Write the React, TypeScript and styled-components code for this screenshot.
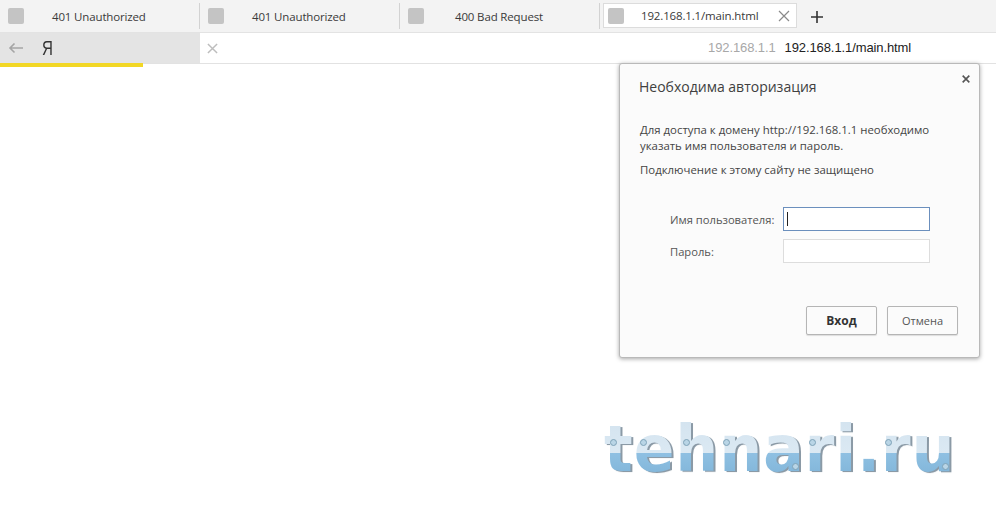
import React from "react";
import styled, { createGlobalStyle } from "styled-components";

const GlobalStyle = createGlobalStyle`
  html, body {
    margin: 0;
    padding: 0;
    background: #ffffff;
  }
  body {
    font-family: "Open Sans", "Noto Sans", sans-serif;
  }
`;

const Page = styled.div`
  width: 996px;
  height: 505px;
  overflow: hidden;
`;

const TabBar = styled.div`
  display: flex;
  height: 33px;
  background: #f3f3f3;
  border-bottom: 1px solid #e3e3e3;
  box-sizing: border-box;
`;

const Tab = styled.div`
  display: flex;
  align-items: center;
  width: 200px;
  height: 32px;
  padding: 0 0 0 8px;
  box-sizing: border-box;
  position: relative;
  &::after {
    content: "";
    position: absolute;
    right: 0;
    top: 3px;
    width: 1px;
    height: 26px;
    background: #d2d2d2;
  }
`;

const Favicon = styled.span`
  width: 16px;
  height: 16px;
  border-radius: 2px;
  background: #c4c4c4;
  flex: none;
`;

const TabTitle = styled.span<{ $gap?: number }>`
  margin-left: ${(p) => p.$gap ?? 28}px;
  font-size: 11.5px;
  letter-spacing: -0.15px;
  color: #3a3a3a;
  white-space: nowrap;
`;

const ActiveTab = styled.div`
  display: flex;
  align-items: center;
  width: 194px;
  height: 25px;
  margin: 3px 0 0 3px;
  padding: 0 6px 0 4px;
  box-sizing: border-box;
  background: #ffffff;
  border: 1px solid #dcdcdc;
`;

const ActiveTitle = styled(TabTitle)`
  flex: 1;
`;

const PlusButton = styled.span`
  display: flex;
  align-items: center;
  margin: 1px 0 0 14px;
`;

const NavBar = styled.div`
  display: flex;
  height: 30px;
  border-bottom: 1px solid #e2e2e2;
`;

const NavLeft = styled.div`
  display: flex;
  align-items: center;
  width: 200px;
  padding-left: 8px;
  box-sizing: border-box;
  background: #e4e4e4;
  position: relative;
`;

const YandexMark = styled.span`
  display: inline-block;
  margin-left: 16px;
  font-family: "Liberation Sans", sans-serif;
  font-size: 21px;
  color: #333333;
  transform: scaleX(0.72);
`;

const LoadBar = styled.span`
  position: absolute;
  left: 0;
  bottom: -4px;
  width: 143px;
  height: 4px;
  background: #f2d725;
`;

const AddressArea = styled.div`
  flex: 1;
  display: flex;
  align-items: center;
  padding-left: 7px;
`;

const AddressText = styled.div`
  margin: 0 0 1px 490px;
  font-family: "Liberation Sans", sans-serif;
  font-size: 13px;
  letter-spacing: -0.1px;
  color: #222222;
  white-space: nowrap;
`;

const AddressHost = styled.span`
  color: #a8a8a8;
  margin-right: 9px;
`;

const Content = styled.div`
  position: relative;
  display: flex;
  flex-direction: column;
  align-items: flex-end;
  padding: 0 16px 0 0;
`;

const Dialog = styled.div`
  width: 361px;
  height: 295px;
  margin-top: -1px;
  padding: 13px 21px 0 20px;
  box-sizing: border-box;
  position: relative;
  background: #fbfbfb;
  border: 1px solid #b9b9b9;
  border-radius: 3px;
  box-shadow: 0 1px 4px rgba(0, 0, 0, 0.35);
  color: #444444;
`;

const CloseButton = styled.span`
  position: absolute;
  top: 11px;
  right: 9px;
  display: flex;
`;

const DialogTitle = styled.div`
  margin-left: -1px;
  font-size: 14px;
  line-height: 19px;
  color: #404040;
`;

const Message = styled.div`
  margin-top: 26px;
  font-size: 11.4px;
  line-height: 16px;
  width: 310px;
`;

const Notice = styled.div`
  margin-top: 8px;
  font-size: 11.4px;
  line-height: 15px;
`;

const FormGrid = styled.div`
  display: grid;
  grid-template-columns: 113px 147px;
  row-gap: 8px;
  margin: 30px 0 0 30px;
  align-items: center;
`;

const FieldLabel = styled.label`
  font-size: 11.2px;
  color: #555555;
  white-space: nowrap;
`;

const Field = styled.div<{ $focused?: boolean }>`
  height: 24px;
  box-sizing: border-box;
  background: #ffffff;
  border: 1px solid ${(p) => (p.$focused ? "#6b8fbd" : "#dddddd")};
  display: flex;
  align-items: center;
  padding-left: 3px;
`;

const Caret = styled.span`
  width: 1px;
  height: 14px;
  background: #222222;
`;

const Buttons = styled.div`
  display: flex;
  justify-content: flex-end;
  gap: 10px;
  margin-top: 43px;
`;

const Button = styled.button<{ $primary?: boolean }>`
  width: 71px;
  height: 29px;
  padding: 0;
  font-family: inherit;
  font-size: ${(p) => (p.$primary ? 12 : 11)}px;
  font-weight: ${(p) => (p.$primary ? 700 : 400)};
  color: ${(p) => (p.$primary ? "#333333" : "#555555")};
  background: #fbfbfb;
  border: 1px solid #b5b5b5;
  border-radius: 2px;
  box-shadow: 0 1px 1px rgba(0, 0, 0, 0.12);
`;

const Watermark = styled.div`
  position: absolute;
  left: 604px;
  top: 353px;
  width: 352px;
  height: 58px;
`;

const WatermarkText = styled.div`
  font-family: "DejaVu Sans", sans-serif;
  font-weight: 700;
  font-size: 60px;
  line-height: 58px;
  letter-spacing: 1.1px;
  white-space: nowrap;
  transform: scaleY(1.08);
  transform-origin: 0 0;
  background: linear-gradient(#d3e3ef 0%, #dbe9f3 57%, #8fc0e2 58%, #7fb4d8 100%);
  -webkit-background-clip: text;
  background-clip: text;
  color: transparent;
  filter: drop-shadow(2px 1px 0 #8b9aa6);
`;

const Screw = styled.span<{ $x: number; $y: number }>`
  position: absolute;
  left: ${(p) => p.$x}px;
  top: ${(p) => p.$y}px;
  width: 7px;
  height: 7px;
  box-sizing: border-box;
  border-radius: 50%;
  background: #b9d5e6;
  border: 1px solid #7fa3b8;
`;

const Cross = ({ size, color, width }: { size: number; color: string; width: number }) => (
  <svg width={size} height={size} viewBox="0 0 12 12">
    <path d="M1 1 L11 11 M11 1 L1 11" stroke={color} strokeWidth={width} fill="none" />
  </svg>
);

const screws = [
  [6, 22],
  [36, 22],
  [79, 22],
  [119, 22],
  [205, 22],
  [281, 22],
  [188, 46],
  [338, 46],
];

export default function App(): React.ReactElement {
  return (
    <Page>
      <GlobalStyle />
      <TabBar>
        <Tab>
          <Favicon />
          <TabTitle>401 Unauthorized</TabTitle>
        </Tab>
        <Tab>
          <Favicon />
          <TabTitle>401 Unauthorized</TabTitle>
        </Tab>
        <Tab>
          <Favicon />
          <TabTitle $gap={31}>400 Bad Request</TabTitle>
        </Tab>
        <ActiveTab>
          <Favicon />
          <ActiveTitle $gap={17}>192.168.1.1/main.html</ActiveTitle>
          <Cross size={12} color="#8a8a8a" width={1.2} />
        </ActiveTab>
        <PlusButton>
          <svg width="12" height="12" viewBox="0 0 12 12">
            <path d="M6 0 V12 M0 6 H12" stroke="#333333" strokeWidth="1.6" fill="none" />
          </svg>
        </PlusButton>
      </TabBar>
      <NavBar>
        <NavLeft>
          <svg width="16" height="12" viewBox="0 0 16 12">
            <path d="M15 6 H2 M6.5 1.5 L2 6 L6.5 10.5" stroke="#a5a5a5" strokeWidth="1.6" fill="none" />
          </svg>
          <YandexMark>Я</YandexMark>
          <LoadBar />
        </NavLeft>
        <AddressArea>
          <Cross size={11} color="#bdbdbd" width={1.6} />
          <AddressText>
            <AddressHost>192.168.1.1</AddressHost>
            192.168.1.1/main.html
          </AddressText>
        </AddressArea>
      </NavBar>
      <Content>
        <Dialog>
          <CloseButton>
            <Cross size={8} color="#555555" width={2.4} />
          </CloseButton>
          <DialogTitle>Необходима авторизация</DialogTitle>
          <Message>
            Для доступа к домену http://192.168.1.1 необходимо указать имя пользователя и пароль.
          </Message>
          <Notice>Подключение к этому сайту не защищено</Notice>
          <FormGrid>
            <FieldLabel>Имя пользователя:</FieldLabel>
            <Field $focused>
              <Caret />
            </Field>
            <FieldLabel>Пароль:</FieldLabel>
            <Field />
          </FormGrid>
          <Buttons>
            <Button $primary>Вход</Button>
            <Button>Отмена</Button>
          </Buttons>
        </Dialog>
        <Watermark>
          <WatermarkText>tehnari.ru</WatermarkText>
          {screws.map(([x, y]) => (
            <Screw key={`${x}-${y}`} $x={x} $y={y} />
          ))}
        </Watermark>
      </Content>
    </Page>
  );
}
